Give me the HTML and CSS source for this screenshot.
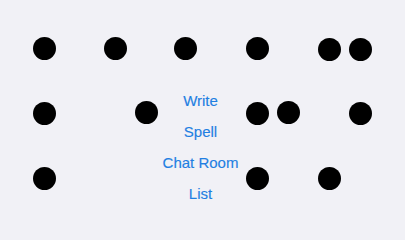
FILE: index.html
```html
<!DOCTYPE html>
<html>
<head>
<meta charset="utf-8">
<link rel="stylesheet" href="styles.css">
</head>
<body>
<div class="stage">
  <div class="dots">
    <span class="dot" style="left:44.5px;top:48px"></span>
    <span class="dot" style="left:115.8px;top:48.5px"></span>
    <span class="dot" style="left:185.3px;top:48.5px"></span>
    <span class="dot" style="left:257px;top:48px"></span>
    <span class="dot" style="left:329.7px;top:49.3px"></span>
    <span class="dot" style="left:360.3px;top:49.3px"></span>

    <span class="dot" style="left:44.5px;top:113px"></span>
    <span class="dot" style="left:146.8px;top:112.7px"></span>
    <span class="dot" style="left:257px;top:113.3px"></span>
    <span class="dot" style="left:288px;top:112.5px"></span>
    <span class="dot" style="left:360.3px;top:113.7px"></span>

    <span class="dot" style="left:44.5px;top:178px"></span>
    <span class="dot" style="left:257px;top:178px"></span>
    <span class="dot" style="left:329.7px;top:178.5px"></span>
  </div>
  <nav class="menu">
    <a class="link" href="#">Write</a>
    <a class="link" href="#">Spell</a>
    <a class="link" href="#">Chat Room</a>
    <a class="link" href="#">List</a>
  </nav>
</div>
</body>
</html>
```
FILE: styles.css
```css
html, body {
  margin: 0;
  padding: 0;
  background: #f1f1f6;
}
body {
  font-family: "Liberation Sans", Arial, sans-serif;
}
.stage {
  position: relative;
  width: 405px;
  height: 228px;
  overflow: hidden;
}
.dots {
  position: absolute;
  inset: 0;
}
.dot {
  position: absolute;
  width: 23px;
  height: 23px;
  margin-left: -11.5px;
  margin-top: -11.5px;
  border-radius: 50%;
  background: #000;
}
.menu {
  position: relative;
  display: flex;
  flex-direction: column;
  align-items: center;
  padding-top: 85px;
  padding-right: 4px;
}
.link {
  font-size: 15px;
  line-height: 31px;
  color: #1f7fe2;
  text-decoration: none;
  -webkit-text-stroke: 0.15px #1f7fe2;
}
```
